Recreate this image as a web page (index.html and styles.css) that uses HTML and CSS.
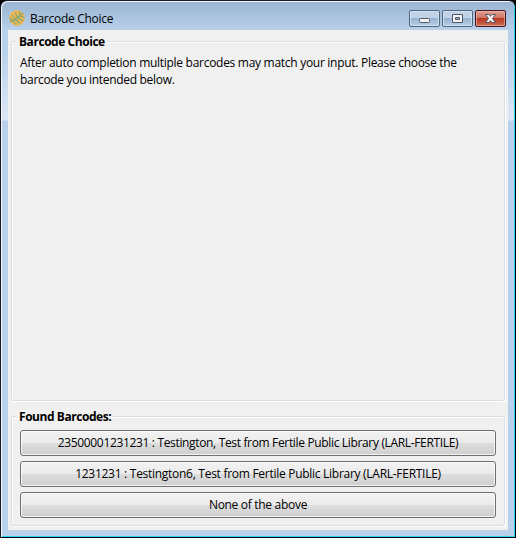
FILE: index.html
```
<!DOCTYPE html>
<html lang="en">
<head>
<meta charset="utf-8">
<title>Barcode Choice</title>
<link rel="stylesheet" href="styles.css">
</head>
<body>
<div class="window">
  <header class="titlebar">
    <svg class="app-icon" width="16" height="16" viewBox="0 0 16 16">
      <circle cx="8" cy="8" r="7.8" fill="#efb655"/>
      <path d="M1 12Q7 10 14 3M4 11L1 8M6.500 9.500L3 5M9 8L6 2.500M11 6L10 1.500M4 11L7 14.500M6.500 9.500L11 13.500M9 8L14 11M11 6L15.500 7.500" fill="none" stroke="#7aa777" stroke-width="1.1"/>
    </svg>
    <span class="title">Barcode Choice</span>
    <div class="controls">
      <button class="control" aria-label="Minimize"><svg width="29" height="15" viewBox="0 0 29 15"><rect x="9.500" y="7.500" width="10" height="4" rx="1" fill="#f4f4f4" stroke="#535666"/></svg></button>
      <button class="control" aria-label="Maximize"><svg width="29" height="15" viewBox="0 0 29 15"><path d="M9.500 3.500h10v8h-10zM12.500 6.500v2h4v-2z" fill="#f4f4f4" fill-rule="evenodd" stroke="#535666"/></svg></button>
      <button class="control close" aria-label="Close"><svg width="29" height="15" viewBox="0 0 29 15"><path d="M9.500 3.500h3.500l1.500 1.800 1.500-1.800h3.500L16.500 7.500l3 4H16l-1.500-1.800L13 11.500H9.500l3-4z" fill="#f6f6f6" stroke="#535666"/></svg></button>
    </div>
  </header>
  <main class="client">
    <section class="group message">
      <h1 class="legend">Barcode Choice</h1>
      <p><span class="line1">After auto completion multiple barcodes may match your input. Please choose the</span><br><span class="line2">barcode you intended below.</span></p>
    </section>
    <section class="group found">
      <h2 class="legend">Found Barcodes:</h2>
      <button class="choice"><span class="choice1">23500001231231 : Testington, Test from Fertile Public Library (LARL-FERTILE)</span></button>
      <button class="choice"><span class="choice2">1231231 : Testington6, Test from Fertile Public Library (LARL-FERTILE)</span></button>
      <button class="choice"><span class="choice3">None of the above</span></button>
    </section>
  </main>
</div>
</body>
</html>
```
FILE: styles.css
```
* { box-sizing: border-box; }
html { background: #000; }
body { margin: 0; font: 12px/17px "Open Sans", "Noto Sans", sans-serif; color: #000; }
.window {
  width: 516px; height: 538px; padding: 0 6px 6px;
  border: 1px solid #151a20; border-right-color: #000; border-bottom-color: #000;
  border-radius: 7px 7px 0 0;
  background: linear-gradient(#99b4d1 0, #b9d1ea 30px, #b9d1ea 50px, #dce8f5 119px, #b9d1ea 120px);
  box-shadow: inset 1px 1px #f2f8fc, inset -1px -1px #25d4f5;
}
.titlebar { height: 29px; display: flex; padding: 9px 3px 0 2px; }
.app-icon { flex: none; }
.title { margin: 1px 0 0 5px; line-height: 16px; letter-spacing: -.28px; white-space: nowrap; }
.controls { margin-left: auto; display: flex; gap: 2px; }
.control {
  width: 31px; height: 17px; padding: 0; display: flex; justify-content: center; align-items: center;
  border: 1px solid #53677e; border-radius: 2px;
  background: linear-gradient(#c0d3e8 0 46%, #98b3d0 47%, #b7cee7);
  box-shadow: inset 0 0 0 1px #dbe9f6aa;
}
.control svg { flex: none; }
.close {
  border-color: #4a1420;
  background: linear-gradient(#e0a193, #cf7564 46%, #b9361f 47%, #cb6c50);
  box-shadow: inset 0 0 0 1px #edb6a8aa;
}
.client { width: 500px; height: 500px; margin-left: 1px; padding: 11px 3px 4px; background: #f0f0f0; }
.group {
  border: 1px solid #d5dfe5; border-radius: 3px; padding: 0 8px;
  box-shadow: inset 1px 1px #fff, 1px 1px #fff;
}
.message { height: 360px; }
.found { height: 110px; margin-top: 15px; display: flex; flex-direction: column; gap: 5px; }
.legend {
  width: max-content; height: 17px; margin: -9px 0 0 -4px; padding: 0 2px 0 3px;
  background: #f0f0f0; font-size: 12px; line-height: 17px; font-weight: 700; letter-spacing: -.45px;
}
.found .legend { margin-bottom: 0; }
p { margin: 4px 0 0; line-height: 17px; white-space: nowrap; }
.line1 { letter-spacing: -.287px; }
.line2 { letter-spacing: -.31px; }
.choice1 { letter-spacing: -.34px; }
.choice2 { letter-spacing: -.28px; }
.choice3 { letter-spacing: -.3px; }
.choice {
  width: 476px; height: 26px; flex: none; padding: 0; border: 1px solid #707070; border-radius: 3px;
  background: linear-gradient(#f2f2f2, #ebebeb 49%, #dddddd 50%, #cfcfcf);
  box-shadow: inset 0 0 0 1px #fafafacc;
  font: inherit; line-height: 22px; color: #000; white-space: nowrap;
}
```
